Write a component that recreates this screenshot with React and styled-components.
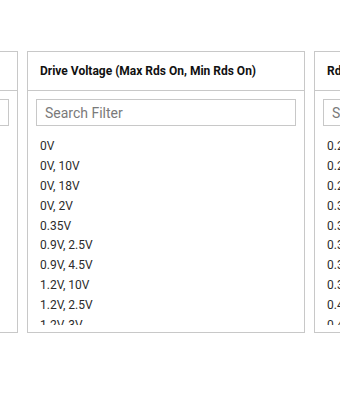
import React from 'react';
import styled, { createGlobalStyle } from 'styled-components';

const GlobalStyle = createGlobalStyle`
  html, body {
    margin: 0;
    padding: 0;
    background: #fff;
    font-family: Roboto, "Liberation Sans", Arial, sans-serif;
  }
`;

const Viewport = styled.div`
  width: 340px;
  height: 403px;
  overflow: hidden;
  padding-top: 51px;
  box-sizing: border-box;
`;

const Track = styled.div`
  display: flex;
  gap: 9px;
  margin-left: -260px;
`;

const Panel = styled.div`
  flex: 0 0 278px;
  height: 282px;
  box-sizing: border-box;
  border: 1px solid #c8c8c8;
  display: flex;
  flex-direction: column;
  background: #fff;
`;

const Header = styled.div`
  height: 39px;
  box-sizing: border-box;
  border-bottom: 1px solid #c8c8c8;
  padding: 0 12px;
  display: flex;
  align-items: center;
  font-size: 12px;
  font-weight: 700;
  color: #111;
  white-space: nowrap;
  overflow: hidden;
`;

const Body = styled.div`
  flex: 1;
  min-height: 0;
  padding: 8px 8px 7px;
  display: flex;
  flex-direction: column;
`;

const Search = styled.input`
  height: 27px;
  flex: 0 0 27px;
  box-sizing: border-box;
  border: 1px solid #c8c8c8;
  border-radius: 0;
  padding: 0 8px;
  font-family: inherit;
  font-size: 14px;
  color: #333;
  outline: none;
  &::placeholder {
    color: #7a7a7a;
  }
`;

const List = styled.ul`
  list-style: none;
  margin: 10px 0 0;
  padding: 0 4px;
  flex: 1;
  min-height: 0;
  overflow: hidden;
`;

const Item = styled.li`
  height: 19.9px;
  line-height: 20px;
  font-size: 12px;
  color: #2b2b2b;
  white-space: nowrap;
`;

const panels = [
  { title: 'Channel Type', items: [] },
  {
    title: 'Drive Voltage (Max Rds On, Min Rds On)',
    items: ['0V', '0V, 10V', '0V, 18V', '0V, 2V', '0.35V', '0.9V, 2.5V', '0.9V, 4.5V', '1.2V, 10V', '1.2V, 2.5V', '1.2V, 3V', '1.5V, 4.5V'],
  },
  {
    title: 'Rds On (Max) @ Id, Vgs',
    items: ['0.22Ω @ 3A', '0.25Ω @ 2A', '0.28Ω @ 1A', '0.3Ω @ 5A', '0.32Ω @ 2A', '0.35Ω @ 1A', '0.36Ω @ 4A', '0.38Ω @ 2A', '0.4Ω @ 1A', '0.45Ω @ 2A', '0.5Ω @ 1A'],
  },
];

export default function App() {
  return (
    <>
      <GlobalStyle />
      <Viewport>
        <Track>
          {panels.map((p) => (
            <Panel key={p.title}>
              <Header>{p.title}</Header>
              <Body>
                <Search placeholder="Search Filter" />
                <List>
                  {p.items.map((it) => <Item key={it}>{it}</Item>)}
                </List>
              </Body>
            </Panel>
          ))}
        </Track>
      </Viewport>
    </>
  );
}
